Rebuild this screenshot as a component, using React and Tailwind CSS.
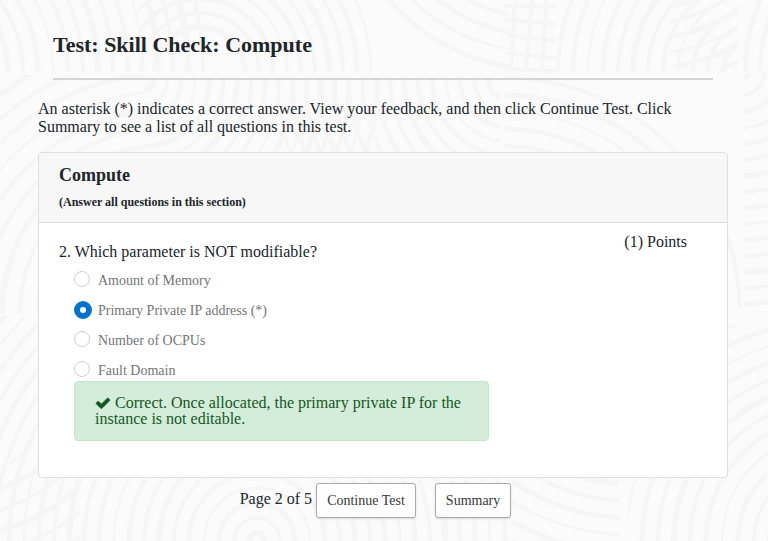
import React from "react";

// Groups of concentric rings; each is visible only inside its own box.
const RINGS = [
  { box: [-10, -10, 240, 82], c: [-97, 72], from: 105, to: 310, step: 15 },
  { box: [138, -10, 237, 82], c: [200, 72], from: 45, to: 172, step: 14 },
  { box: [385, -10, 125, 82], c: [540, -130], from: 131, to: 205, step: 17 },
  { box: [556, -10, 182, 82], c: [755, 72], from: 32, to: 200, step: 15 },
  { box: [670, -10, 68, 78], c: [640, -130], from: 140, to: 260, step: 15 },
  { box: [743, -10, 60, 82], c: [925, 72], from: 150, to: 180, step: 15 },
  { box: [-10, 75, 155, 238], c: [170, 313], from: 60, to: 320, step: 18 },
  { box: [145, 76, 235, 100], c: [145, 82], from: 8, to: 240, step: 14 },
  { box: [256, 76, 244, 100], c: [510, 78], from: 22, to: 240, step: 14 },
  { box: [505, 76, 236, 233], c: [505, 313], from: 150, to: 240, step: 17 },
  { box: [744, 73, 60, 236], c: [740, 72], from: 8, to: 236, step: 16 },
  { box: [-10, 316, 520, 240], c: [257, 541], from: 8, to: 380, step: 15 },
  { box: [-10, 455, 90, 100], c: [-60, 330], from: 90, to: 250, step: 20 },
  { box: [512, 470, 107, 80], c: [630, 310], from: 174, to: 265, step: 17 },
  { box: [628, 325, 180, 230], c: [830, 541], from: 60, to: 300, step: 16 },
];

const WIDTHS = [6, 4, 5, 3, 5, 4];

function radii({ from, to, step }) {
  const list = [];
  for (let r = from; r <= to; r += step) list.push(r);
  return list;
}

function Backdrop() {
  return (
    <svg
      aria-hidden="true"
      className="pointer-events-none absolute inset-0 -z-10 h-full w-full"
      viewBox="0 0 768 541"
      preserveAspectRatio="xMinYMin slice"
      fill="none"
      stroke="#f6f6f6"
    >
      <defs>
        {RINGS.map(({ box }, i) => (
          <clipPath id={`ring-${i}`} key={i}>
            <rect x={box[0]} y={box[1]} width={box[2]} height={box[3]} rx="3" />
          </clipPath>
        ))}
      </defs>
      {RINGS.map((ring, i) => (
        <g clipPath={`url(#ring-${i})`} key={i}>
          {radii(ring).map((r, n) => (
            <circle key={r} cx={ring.c[0]} cy={ring.c[1]} r={r} strokeWidth={WIDTHS[n % 6]} />
          ))}
        </g>
      ))}
      <path
        strokeWidth="4"
        d="M505 6l51 1M505 20l51 4M507 36l49 5M505 53l51 5M505 69l51 2M515 0l-4 70M532 0l-6 70M546 0l-4 70"
      />
    </svg>
  );
}

function CheckIcon() {
  return (
    <svg aria-hidden="true" className="inline-block h-4 w-4 align-text-bottom" viewBox="0 0 1792 1792" fill="currentColor">
      <path
        stroke="currentColor"
        strokeWidth="60"
        d="M1671 566q0 40-28 68l-724 724-136 136q-28 28-68 28t-68-28l-136-136-362-362q-28-28-28-68t28-68l136-136q28-28 68-28t68 28l294 295 656-657q28-28 68-28t68 28l136 136q28 28 28 68z"
      />
    </svg>
  );
}

const OPTIONS = ["Amount of Memory", "Primary Private IP address (*)", "Number of OCPUs", "Fault Domain"];

function Option({ id, label, checked }) {
  return (
    <div className="flex items-start">
      <span className="w-6 shrink-0">
        <input
          type="radio"
          id={id}
          name="answer"
          defaultChecked={checked}
          className="block h-4 w-4 appearance-none rounded-full border border-[#d0d0d0] bg-white checked:h-[18px] checked:w-[18px] checked:border-[6px] checked:border-[#0572ce]"
        />
      </span>
      <label htmlFor={id} className="text-sm leading-5 text-[#757575]">
        {label}
      </label>
    </div>
  );
}

function Button({ children }) {
  return (
    <button
      type="button"
      className="mr-[15px] h-[35px] rounded-[3px] border border-[#aaaaaa] bg-white px-2.5 text-sm text-[#383838] shadow-sm"
    >
      {children}
    </button>
  );
}

export default function App() {
  return (
    <div className="relative isolate min-h-screen overflow-hidden bg-[#fbfbfb] pr-10 pl-[38px] font-['Liberation_Serif',serif] text-base text-[#212529]">
      <Backdrop />
      <header className="mx-[15px] border-b-2 border-[#d5d5d5] pt-8 pb-5">
        <h1 className="text-[22px] leading-[26px] font-bold">Test: Skill Check: Compute</h1>
      </header>
      <main>
        <p className="mt-5 leading-[18px]">
          An asterisk (*) indicates a correct answer. View your feedback, and then click Continue Test. Click Summary
          to see a list of all questions in this test.
        </p>
        <section className="mt-4 overflow-hidden rounded border border-[#dfdfdf] bg-white">
          <div className="border-b border-[#d9d9d9] bg-[#f7f7f7] px-5 pt-3 pb-[11px]">
            <h2 className="text-lg leading-5 font-bold">Compute</h2>
            <h3 className="mt-2 text-xs leading-[18px] font-bold">(Answer all questions in this section)</h3>
          </div>
          <div className="pt-[9px] pr-10 pb-9 pl-5">
            <div className="flex items-start justify-between">
              <h4 className="mt-2.5 leading-5">2. Which parameter is NOT modifiable?</h4>
              <span className="leading-5">(1) Points</span>
            </div>
            <div className="mt-[9px] ml-[15px]">
              <div role="radiogroup" aria-label="Which parameter is NOT modifiable?" className="flex flex-col gap-2.5">
                {OPTIONS.map((label, i) => (
                  <Option key={label} id={`option-${i}`} label={label} checked={i === 1} />
                ))}
              </div>
              <div
                role="status"
                className="max-w-[415px] rounded border border-[#c3e6cb] bg-[#d4edda] px-5 py-[13px] leading-4 text-[#155724]"
              >
                <CheckIcon /> Correct. Once allocated, the primary private IP for the instance is not editable.
              </div>
            </div>
          </div>
        </section>
      </main>
      <footer className="mt-[5px] flex flex-wrap items-start justify-center gap-1">
        <span className="leading-8">Page 2 of 5</span>
        <Button>Continue Test</Button>
        <Button>Summary</Button>
      </footer>
    </div>
  );
}
